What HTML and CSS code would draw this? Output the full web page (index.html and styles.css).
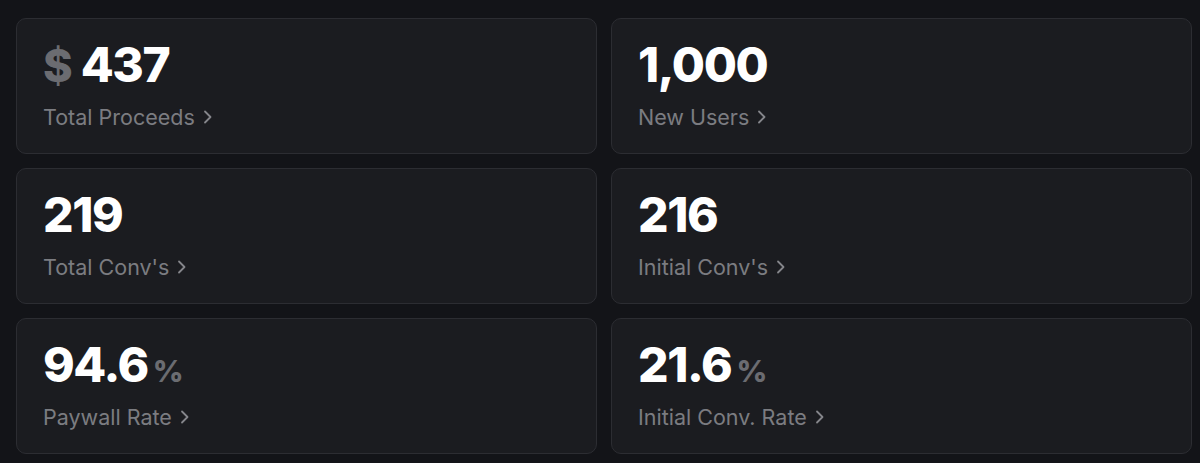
FILE: index.html
```html
<!DOCTYPE html>
<html>
<head>
<meta charset="utf-8">
<link rel="stylesheet" href="styles.css">
</head>
<body>
<div class="grid">
  <div class="card">
    <div class="value"><span class="unit pre">$</span>437</div>
    <div class="label">Total Proceeds <svg class="chev" viewBox="0 0 10 14"><path d="M2 1.5l5.5 5.5-5.5 5.5"/></svg></div>
  </div>
  <div class="card">
    <div class="value">1,000</div>
    <div class="label">New Users <svg class="chev" viewBox="0 0 10 14"><path d="M2 1.5l5.5 5.5-5.5 5.5"/></svg></div>
  </div>
  <div class="card">
    <div class="value">219</div>
    <div class="label">Total Conv's <svg class="chev" viewBox="0 0 10 14"><path d="M2 1.5l5.5 5.5-5.5 5.5"/></svg></div>
  </div>
  <div class="card">
    <div class="value">216</div>
    <div class="label">Initial Conv's <svg class="chev" viewBox="0 0 10 14"><path d="M2 1.5l5.5 5.5-5.5 5.5"/></svg></div>
  </div>
  <div class="card">
    <div class="value">94.6<span class="unit post">%</span></div>
    <div class="label">Paywall Rate <svg class="chev" viewBox="0 0 10 14"><path d="M2 1.5l5.5 5.5-5.5 5.5"/></svg></div>
  </div>
  <div class="card">
    <div class="value">21.6<span class="unit post">%</span></div>
    <div class="label">Initial Conv. Rate <svg class="chev" viewBox="0 0 10 14"><path d="M2 1.5l5.5 5.5-5.5 5.5"/></svg></div>
  </div>
</div>
</body>
</html>
```

FILE: styles.css
```css
html, body {
  margin: 0;
  background: #131418;
}
body {
  padding: 18px 8px 10px 16px;
  font-family: Inter, "Noto Sans", sans-serif;
}
.grid {
  display: grid;
  grid-template-columns: 1fr 1fr;
  column-gap: 14px;
  row-gap: 14px;
}
.card {
  height: 136px;
  box-sizing: border-box;
  border: 1px solid #2c2d32;
  border-radius: 10px;
  background: #1b1c20;
  padding: 20px 26px 0 26px;
}
.value {
  height: 52px;
  color: #ffffff;
  font-size: 48px;
  font-weight: 800;
  line-height: 52px;
  letter-spacing: -1.4px;
}
.unit {
  color: #6b6c71;
  font-weight: 800;
  letter-spacing: 0;
  line-height: 0;
}
.unit.pre { margin-right: 8px; font-size: 45px; }
.unit.post { margin-left: 5px; font-size: 30px; }
.label {
  margin-top: 14px;
  color: #7b7c81;
  font-size: 21.5px;
  line-height: 24px;
  display: flex;
  align-items: center;
}
.chev {
  width: 10px;
  height: 14px;
  margin-left: 8px;
  fill: none;
  stroke: #85868b;
  stroke-width: 1.8;
  stroke-linecap: round;
  stroke-linejoin: round;
}
```
